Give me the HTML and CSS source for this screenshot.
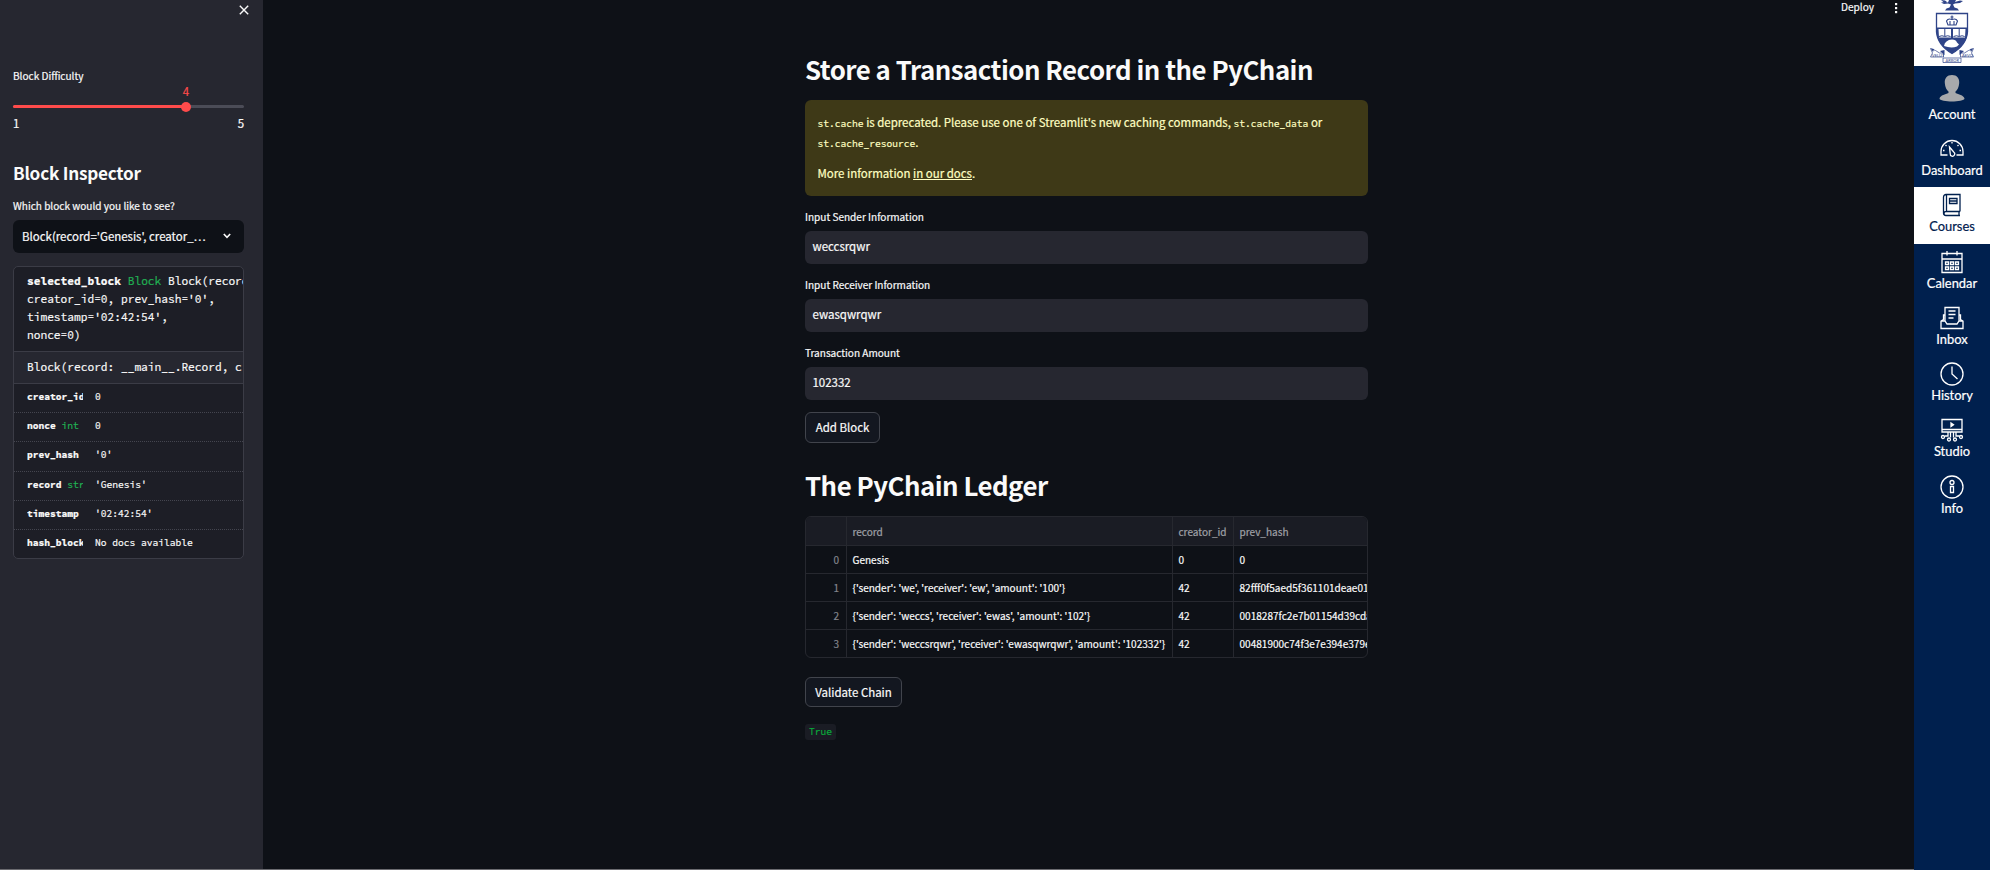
FILE: index.html
```html
<!DOCTYPE html>
<html lang="en">
<head>
<meta charset="utf-8">
<title>PyChain</title>
<link rel="stylesheet" href="styles.css">
</head>
<body>
<div class="app">
  <aside class="sidebar">
    <div class="side-head"><svg width="10" height="10" viewBox="0 0 10 10"><path d="M0.8 0.8 9.2 9.2M9.2 0.8 0.8 9.2" stroke="#fafafa" stroke-width="1.4"/></svg></div>
    <div class="label">Block Difficulty</div>
    <div class="slider">
      <div class="val">4</div>
      <div class="track"><div class="fill"></div><div class="thumb"></div></div>
      <div class="ends"><span>1</span><span>5</span></div>
    </div>
    <h2 class="side-title">Block Inspector</h2>
    <div class="label which">Which block would you like to see?</div>
    <div class="select"><span>Block(record='Genesis', creator_…</span><svg width="8" height="6" viewBox="0 0 8 6"><path d="M.8 1 4 4.3 7.2 1" fill="none" stroke="#fafafa" stroke-width="1.6"/></svg></div>
    <div class="inspect">
      <div class="value"><b>selected_block</b> <i>Block</i> Block(record<br>creator_id=0, prev_hash='0',<br>timestamp='02:42:54',<br>nonce=0)</div>
      <div class="sig">Block(record: __main__.Record, c</div>
      <div class="row"><div><b>creator_id</b></div><span>0</span></div>
      <div class="row"><div><b>nonce</b> <i>int</i></div><span>0</span></div>
      <div class="row"><div><b>prev_hash</b></div><span>'0'</span></div>
      <div class="row"><div><b>record</b> <i>str</i></div><span>'Genesis'</span></div>
      <div class="row"><div><b>timestamp</b></div><span>'02:42:54'</span></div>
      <div class="row"><div><b>hash_block</b></div><span>No docs available</span></div>
    </div>
  </aside>
  <main class="main">
    <header class="toolbar"><span>Deploy</span><svg width="4" height="12" viewBox="0 0 4 12" fill="#fafafa"><rect x="1" y="1" width="2.2" height="2.2"/><rect x="1" y="5" width="2.2" height="2.2"/><rect x="1" y="9" width="2.2" height="2.2"/></svg></header>
    <div class="content">
      <h1 class="h-first">Store a Transaction Record in the PyChain</h1>
      <div class="alert">
        <p><code>st.cache</code> is deprecated. Please use one of Streamlit's new caching commands, <code>st.cache_data</code> or<br><code>st.cache_resource</code>.</p>
        <p class="more">More information <a>in our docs</a>.</p>
      </div>
      <div class="field"><div class="label">Input Sender Information</div><div class="input">weccsrqwr</div></div>
      <div class="field"><div class="label">Input Receiver Information</div><div class="input">ewasqwrqwr</div></div>
      <div class="field"><div class="label">Transaction Amount</div><div class="input">102332</div></div>
      <div class="btn add">Add Block</div>
      <h1 class="h-second">The PyChain Ledger</h1>
      <div class="table">
        <div class="tr th"><span></span><span>record</span><span>creator_id</span><span>prev_hash</span></div>
        <div class="tr"><span>0</span><span>Genesis</span><span>0</span><span>0</span></div>
        <div class="tr"><span>1</span><span>{'sender': 'we', 'receiver': 'ew', 'amount': '100'}</span><span>42</span><span>82fff0f5aed5f361101deae01</span></div>
        <div class="tr"><span>2</span><span>{'sender': 'weccs', 'receiver': 'ewas', 'amount': '102'}</span><span>42</span><span>0018287fc2e7b01154d39cda</span></div>
        <div class="tr"><span>3</span><span>{'sender': 'weccsrqwr', 'receiver': 'ewasqwrqwr', 'amount': '102332'}</span><span>42</span><span>00481900c74f3e7e394e379e</span></div>
      </div>
      <div class="btn validate">Validate Chain</div>
      <div><code class="chip">True</code></div>
    </div>
  </main>
  <nav class="nav">
    <div class="crest">
      <svg width="46" height="66" viewBox="0 0 46 66">
        <path fill="#2f4488" d="M12 0l4 .5L18 2l-3 .5zM20 0h7l-1 2 5-1.500 3 .5-3 2-5 .500-2 1 1.500 3 3 1 1.500 2H16l1.500-2 3-1 1.500-3-3-1-4 .5-3-1.500 4-.5 3 .5z"/>
        <path d="M7.500 13.500h31v18.500q-1 13-15.500 21.500Q8.500 45 7.500 32z" fill="#fff" stroke="#2f4488" stroke-width="1.300"/>
        <path d="M7.500 27.500h31v5q-1 13-15.500 21Q8.500 45 7.500 32z" fill="#2f4488"/>
        <path d="M9.500 29h12.500v8.500H10zM24 29h12.500l-.5 8.500H24z" fill="#fff"/>
        <path d="M15.800 29v7M30.200 29v7M10 36.500q3-1.500 5.800 0 3-1.500 5.700 0M24.500 36.500q3-1.500 5.700 0 3-1.500 5.500 0" fill="none" stroke="#2f4488"/>
        <path d="M19 25l-1.500-4q1.500-3 5.500-1.500 4-1.500 5.500 1.500L27 25zM23 15.500v4M21.500 17h3M21 25v-4M25 25v-4" fill="none" stroke="#2f4488" stroke-width="1.100"/>
        <path d="M15 46q1-6 8-6.500 4 0 5 3l2 2-2 2q-6 2-13-.5z" fill="#fff"/>
        <path d="M1.500 48.500l5 2 4 2.500h4v4h-13l2-4zM44.500 48.500l-5 2-4 2.500h-4v4h13l-2-4zM14 58h18v4.500H14z" fill="#fff" stroke="#2f4488" stroke-width=".7"/>
        <path d="M11 51l4.500-1v5zM35 51l-4.500-1v5zM2 48.500l3 .5-1 3zM44 48.500l-3 .5 1 3z" fill="#2f4488"/>
        <g class="motto"><text x="3" y="56.500">VELUT</text><text x="33" y="56.500">AEVO</text><text x="16.500" y="61.800">ARBOR</text></g>
      </svg>
    </div>
    <div class="item account"><svg width="26" height="28" viewBox="0 0 26 28"><path d="M13 1c5 0 7.500 3.500 7.200 8-.3 4.500-2 7-3.700 8.500v1.500c3 1.500 8 2 9 5.500.2 2-7 3-12.500 3S.3 26.500.5 24.500c1-3.500 6-4 9-5.500v-1.500C7.800 16 6.100 13.500 5.800 9 5.500 4.500 8 1 13 1z"/></svg><span>Account</span></div>
    <div class="item"><svg width="24" height="24" viewBox="0 0 24 24"><path d="M7.500 18H1v-3.500a11 11 0 0 1 22 0V18h-6.500M12 5v1.500M5.500 8l1 1M18.500 8l-1 1M3 13.500h1.500M19.500 13.500H21M9.500 10l4.200 5a2.300 2.300 0 1 1-3.500 1.700z"/></svg><span>Dashboard</span></div>
    <div class="item active"><svg width="24" height="24" viewBox="0 0 24 24"><path d="M20 18.500V1.500H6a2.500 2.500 0 0 0-2.500 2.500v16a2.500 2.500 0 0 0 2.500 2.500h14M20 18.500H6a2 2 0 0 0 0 4M6.500 2v16M19 18.500v4M9.500 5.500h7.500v5H9.500zM9.500 8h7.500"/></svg><span>Courses</span></div>
    <div class="item"><svg width="24" height="24" viewBox="0 0 24 24"><path d="M2 3.500h20v19H2zM2 9h20M7 1v4.500M17 1v4.500M5.500 12h3v2.500h-3zM10.500 12h3v2.500h-3zM15.500 12h3v2.500h-3zM5.500 17h3v2.500h-3zM10.500 17h3v2.500h-3zM15.500 17h3v2.500h-3z"/></svg><span>Calendar</span></div>
    <div class="item"><svg width="24" height="24" viewBox="0 0 24 24"><path d="M5 15V1.500h14V15M5 9H3.500v4.500L1 15v7.500h22V15l-2.500-1.500V9H19M1 15h4l2 3h10l2-3h4M8.500 5h7M8.500 8.500h7M8.500 12h5"/></svg><span>Inbox</span></div>
    <div class="item"><svg width="24" height="24" viewBox="0 0 24 24"><circle cx="12" cy="12" r="11"/><path d="M12 4.500V12l5.500 5"/></svg><span>History</span></div>
    <div class="item"><svg width="24" height="24" viewBox="0 0 24 24"><path d="M2 1.500h20v12.500H2zM2 11.500h20M8 14.500v3.500H4.500M16 14.500v3.500h3.500M10.500 14.500v5M13.500 14.500v5"/><circle cx="3" cy="19" r="1.500"/><circle cx="9" cy="21.500" r="1.500"/><circle cx="15" cy="21.500" r="1.500"/><circle cx="21" cy="19" r="1.500"/><path class="solid" d="M11 5v3.500L13.500 6.800z"/></svg><span>Studio</span></div>
    <div class="item"><svg width="24" height="24" viewBox="0 0 24 24"><circle cx="12" cy="12" r="11"/><circle cx="12" cy="7.500" r="2"/><path d="M10.500 11.500h3v6h-3z"/></svg><span>Info</span></div>
  </nav>
</div>
</body>
</html>
```
FILE: styles.css
```css
* { box-sizing: border-box; }
body { margin: 0; background: #fff; font-family: "Noto Sans CJK SC", "Noto Sans", sans-serif; color: #fafafa; font-size: 11.470px; overflow: hidden; -webkit-text-stroke: .2px currentColor; }
.app { display: flex; width: 1990px; height: 870px; }
.sidebar { width: 263px; height: 870px; background: #262730; padding: 0 19px 0 13px; border-bottom: 1px solid #6b6b70; }
.side-head { height: 66px; display: flex; justify-content: flex-end; padding-top: 5px; margin-right: -5px; }
.label { font-size: 10.050px; line-height: 20px; height: 20px; white-space: nowrap; }
.slider { height: 68px; }
.val { color: #ff4b4b; width: 20px; margin-left: 163px; text-align: center; line-height: 11px; height: 19px; }
.track { height: 3px; border-radius: 2px; background: #4b4c57; display: flex; align-items: center; }
.fill { width: 173px; height: 3px; background: #ff4b4b; border-radius: 2px; }
.thumb { width: 10px; height: 10px; flex: none; border-radius: 50%; background: #ff4b4b; margin-left: -5px; }
.ends { display: flex; justify-content: space-between; line-height: 15px; padding-top: 8px; }
.side-title { margin: 0; padding-top: 2px; font-size: 17.200px; line-height: 34px; height: 42px; font-weight: 600; letter-spacing: -.25px; white-space: nowrap; -webkit-text-stroke: 0; }
.which { height: 24px; }
.select { height: 33px; border-radius: 6px; background: #0e1117; display: flex; align-items: center; justify-content: space-between; padding: 0 13px 1px 9px; white-space: nowrap; }
.inspect { margin-top: 13px; height: 293px; border: 1px solid #3b3c46; border-radius: 5px; background: #1d1e26; overflow: hidden; white-space: nowrap; font-family: "Source Code Pro", "Liberation Mono", monospace; font-size: 11.200px; }
.inspect i { color: #21b354; font-style: normal; }
.value { padding: 5px 0 0 13px; line-height: 18px; height: 84px; }
.sig { background: #262730; border: solid #3b3c46; border-width: 1px 0; height: 33px; line-height: 31px; padding-left: 13px; }
.row { height: 29.200px; line-height: 27px; display: flex; font-size: 9.600px; border-bottom: 1px dotted #44454f; padding-left: 13px; }
.row:last-child { border: 0; }
.row div { width: 56px; overflow: hidden; margin-right: 12px; flex: none; }
.main { width: 1651px; height: 870px; background: #0e1117; display: flex; flex-direction: column; border-bottom: 1px solid #6b6b70; }
.toolbar { height: 47px; display: flex; justify-content: flex-end; gap: 20px; padding: 0 16px 0 0; line-height: 14px; font-size: 10.100px; }
.toolbar svg { margin-top: 2px; }
.content { width: 563px; margin-left: 542px; }
h1 { margin: 0; font-size: 25.800px; line-height: 44px; font-weight: 600; letter-spacing: -.5px; white-space: nowrap; -webkit-text-stroke: 0; }
.h-first { height: 53px; }
.alert { height: 96px; border-radius: 6px; background: #3e3917; color: #ffffc2; padding: 13px 12.500px; line-height: 19.500px; white-space: nowrap; }
.alert p { margin: 0; }
.alert code { font-family: "Source Code Pro", "Liberation Mono", monospace; font-size: 9.600px; line-height: 1; }
.alert .more { margin-top: 12px; }
.alert a { text-decoration: underline; }
.field { height: 68px; padding-top: 11px; }
.input { margin-top: 4px; height: 33px; border-radius: 6px; background: #262730; line-height: 31px; padding-left: 7.500px; }
.btn { border: 1px solid #41444c; border-radius: 6px; background: #131720; text-align: center; white-space: nowrap; }
.add { width: 75px; height: 31px; margin-top: 12px; line-height: 29px; }
.h-second { padding-top: 20px; height: 73px; }
.table { height: 142px; border: 1px solid #26282f; border-radius: 6px; overflow: hidden; font-size: 10.050px; }
.tr { display: grid; grid-template-columns: 41px 326px 61px 1fr; height: 28px; line-height: 27px; white-space: nowrap; border-bottom: 1px solid #26282f; }
.tr span { padding-left: 5.500px; border-right: 1px solid #26282f; overflow: hidden; }
.tr span:first-child { text-align: right; padding-right: 7px; color: #83868d; }
.tr span:last-child { border-right: 0; }
.th { height: 29px; background: #1a1c24; color: #a0a2a8; line-height: 29px; }
.tr:last-child { border: 0; }
.validate { width: 97px; height: 30px; margin-top: 19px; line-height: 28px; }
.chip { display: block; margin-top: 17px; width: 31px; height: 16px; line-height: 16px; border-radius: 3px; background: #1a1c24; color: #09ab3b; text-align: center; font-family: "Source Code Pro", "Liberation Mono", monospace; font-size: 9.600px; }
.nav { width: 76px; background: #00204e; font-family: Lato, sans-serif; font-size: 12.900px; }
.crest { height: 66px; background: #fff; display: flex; justify-content: center; }
.motto { fill: #2f4488; font: 4px Lato, sans-serif; -webkit-text-stroke: 0; }
.item { height: 56.300px; display: flex; flex-direction: column; align-items: center; padding-top: 6px; color: #fff; }
.item svg { flex: none; stroke: currentColor; stroke-width: 1.300; fill: none; }
.item span { line-height: 18px; }
.item .solid { fill: currentColor; }
.account { height: 65px; padding-top: 8px; }
.account svg { fill: #a7a9ac; stroke: none; }
.account span { margin-top: 3px; }
.active { background: #fff; color: #00204e; }
```
